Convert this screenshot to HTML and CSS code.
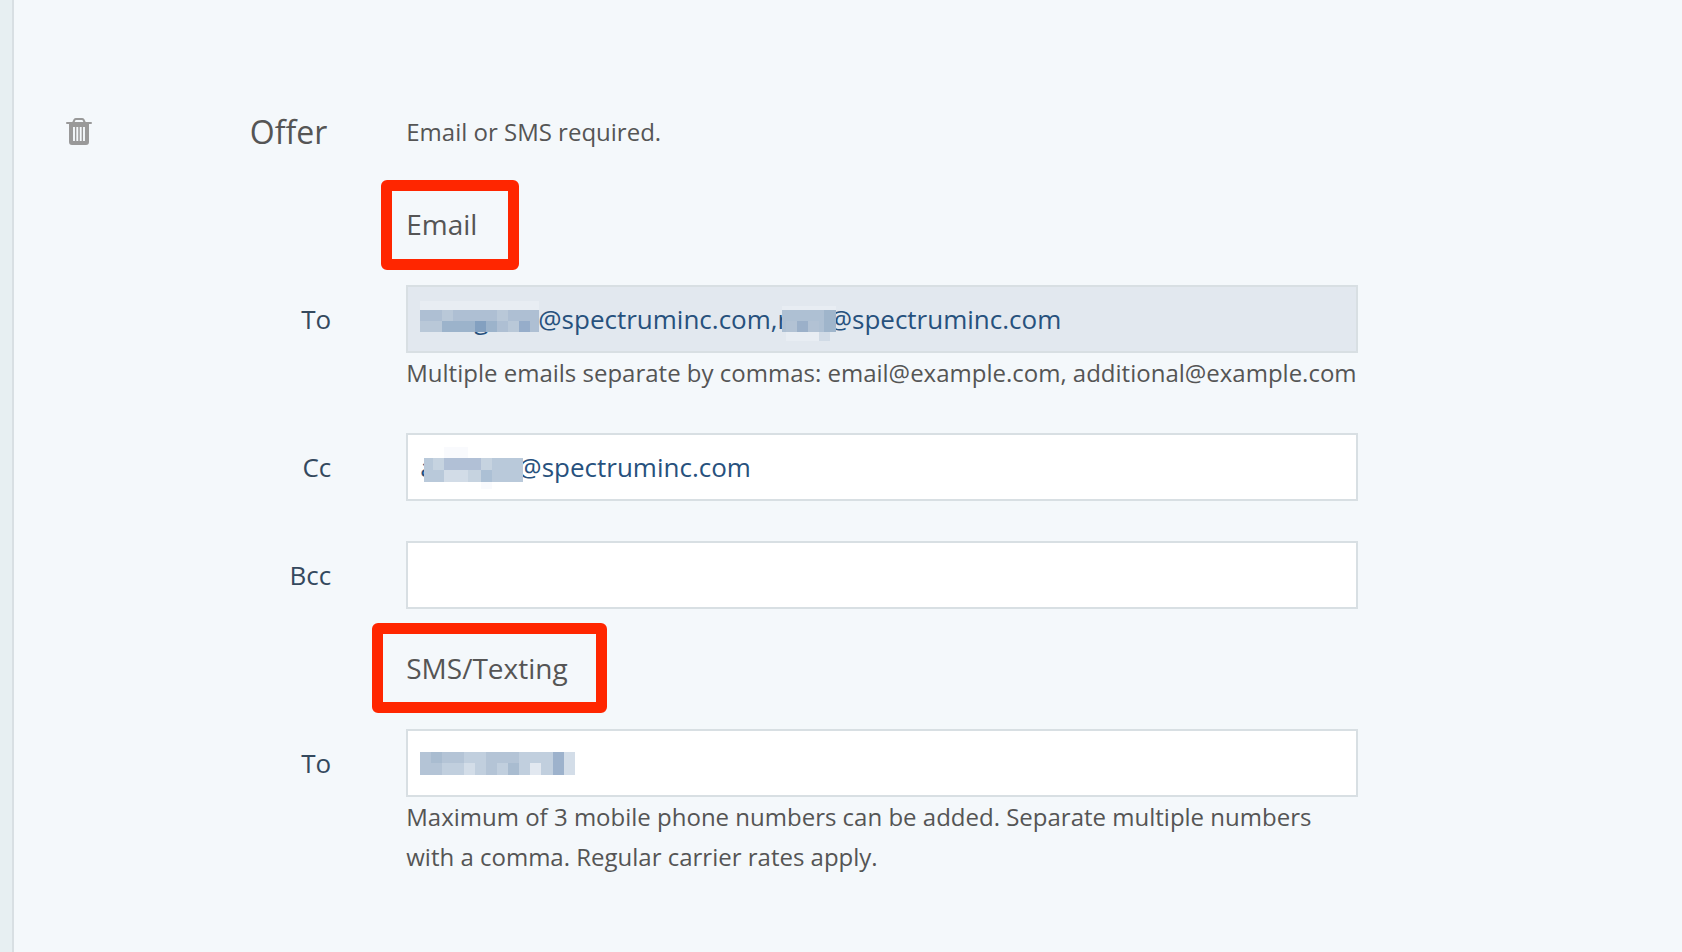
FILE: index.html
```html
<!DOCTYPE html>
<html lang="en">
<head>
    <meta charset="UTF-8">
    <meta name="viewport" content="width=device-width, initial-scale=1.0">
    <title>Offer</title>
    <link rel="stylesheet" href="styles.css">
</head>
<body>
    <main class="panel">
        <form class="offer">
            <div class="row row-top">
                <div class="row-title">
                    <button type="button" class="delete" aria-label="Delete">
                        <svg width="26" height="28" viewBox="0 0 26 28">
                            <path d="M7 5 L8.500 1.800 Q9 1 10 1 H16 Q17 1 17.500 1.800 L19 5" fill="none" stroke="#999" stroke-width="2"/>
                            <path d="M1 4 H25 Q26 4 26 5 Q26 6 25 6 H23 V24 Q23 27 20 27 H6 Q3 27 3 24 V6 H1 Q0 6 0 5 Q0 4 1 4 Z" fill="#999"/>
                            <path d="M8 9 V23 M11.300 9 V23 M14.700 9 V23 M18 9 V23" stroke="#f4f8fb" stroke-width="1.900"/>
                        </svg>
                    </button>
                    <h2>Offer</h2>
                </div>
                <p class="note">Email or SMS required.</p>
            </div>

            <!-- Email -->
            <div class="row row-email">
                <h3 class="group"><span class="marked mark-email">Email</span></h3>
            </div>
            <div class="row">
                <label for="email-to">To</label>
                <div class="field">
                    <input type="text" id="email-to" class="active" value="&nbsp;&nbsp;&nbsp;&nbsp;&nbsp;&nbsp;&nbsp;&nbsp;g&nbsp;&nbsp;&nbsp;&nbsp;&nbsp;&nbsp;&nbsp;&#8202;@spectruminc.com,r&nbsp;&nbsp;&nbsp;&nbsp;&nbsp;&nbsp;@spectruminc.com">
                    <svg class="mask mask-to" width="119" height="31" shape-rendering="crispEdges">
                        <path d="M0 0H119V9H0Z" fill="#e8edf3"/>
                        <path d="M0 9H119V31H0Z" fill="#aebfd3"/>
                        <path d="M22 9H33V20H22Z M77 9H88V20H77Z M0 20H22V31H0Z M88 20H99V31H88Z" fill="#b9c8d8"/>
                        <path d="M22 20H55V31H22Z M66 20H77V31H66Z" fill="#9cb3cb"/>
                        <path d="M55 20H66V31H55Z" fill="#83a0c0"/>
                        <path d="M99 20H110V31H99Z" fill="#96adca"/>
                    </svg>
                    <svg class="mask mask-to2" width="54" height="35" shape-rendering="crispEdges">
                        <path d="M0 0H54V4H0Z M4 26H37V35H4Z" fill="#e8edf3"/>
                        <path d="M0 4H54V26H0Z" fill="#aec0d3"/>
                        <path d="M15 15H26V26H15Z" fill="#9bb0c9"/>
                        <path d="M4 15H15V26H4Z M26 15H37V26H26Z" fill="#b2c2d4"/>
                        <path d="M42 4H54V26H42Z" fill="#9fb5cb"/>
                        <path d="M37 26H48V35H37Z" fill="#d1dbe6"/>
                    </svg>
                    <p class="help">Multiple emails separate by commas: email@example.com, additional@example.com</p>
                </div>
            </div>
            <div class="row">
                <label for="email-cc">Cc</label>
                <div class="field">
                    <input type="text" id="email-cc" value="a&nbsp;&nbsp;&nbsp;&nbsp;&nbsp;&nbsp;&nbsp;&nbsp;&nbsp;&nbsp;&nbsp;&nbsp;&#8202;@spectruminc.com">
                    <svg class="mask mask-cc" width="99" height="42" shape-rendering="crispEdges">
                        <path d="M20 0H44V11H20Z M57 35H68V42H57Z" fill="#f9fafd"/>
                        <path d="M0 11H99V35H0Z" fill="#b9c9da"/>
                        <path d="M9 11H20V23H9Z M57 11H68V23H57Z M44 23H57V35H44Z" fill="#c6d3e0"/>
                        <path d="M20 11H57V23H20Z" fill="#b1c0d6"/>
                        <path d="M20 23H44V35H20Z" fill="#d2dce7"/>
                        <path d="M57 23H68V35H57Z" fill="#acc0d5"/>
                    </svg>
                </div>
            </div>
            <div class="row">
                <label for="email-bcc">Bcc</label>
                <div class="field">
                    <input type="text" id="email-bcc">
                </div>
            </div>

            <!-- SMS -->
            <div class="row row-sms">
                <h3 class="group"><span class="marked mark-sms">SMS/Texting</span></h3>
            </div>
            <div class="row">
                <label for="sms-to">To</label>
                <div class="field">
                    <input type="text" id="sms-to">
                    <svg class="mask mask-sms-to" width="155" height="23" shape-rendering="crispEdges">
                        <path d="M0 0H155V23H0Z" fill="#c1cfde"/>
                        <path d="M0 0H11V11H0Z M22 0H44V11H22Z M66 0H99V11H66Z M0 11H22V23H0Z M66 11H77V23H66Z" fill="#b4c4d6"/>
                        <path d="M11 0H22V11H11Z M88 11H99V23H88Z" fill="#a9bcd0"/>
                        <path d="M44 11H55V23H44Z M144 0H155V23H144Z" fill="#d3dde8"/>
                        <path d="M110 11H121V23H110Z" fill="#e2e8f0"/>
                        <path d="M133 0H144V23H133Z" fill="#9db2cc"/>
                    </svg>
                    <p class="help">Maximum of 3 mobile phone numbers can be added. Separate multiple numbers with a comma. Regular carrier rates apply.</p>
                </div>
            </div>
        </form>
    </main>
</body>
</html>
```
FILE: styles.css
```css
* {
    box-sizing: border-box;
}

body {
    margin: 0;
    padding-left: 12px;
    background-color: #e7eff2;
    font-family: "Open Sans", sans-serif;
    font-size: 24px;
    line-height: 40px;
    color: #555;
}

h2, h3, p {
    margin: 0;
    font-weight: normal;
}

.panel {
    min-height: 100vh;
    padding: 99px 324px 0 0;
    border-left: 2px solid #d8dfe3;
    background-color: #f4f8fb;
}

.row {
    display: grid;
    grid-template-columns: 1fr 3fr;
    column-gap: 75px;
    margin-bottom: 40px;
}

.row-top {
    height: 66px;
    margin: 0;
    align-items: center;
}

.row-title {
    display: flex;
    align-items: center;
    justify-content: space-between;
    padding: 0 4px 0 52px;
}

.delete {
    display: flex;
    padding: 0;
    border: 0;
    background: none;
    cursor: pointer;
}

h2 {
    font-size: 32px;
}

.row-email {
    height: 120px;
    margin: 0;
    align-items: center;
}

.row-sms {
    height: 120px;
    margin: -40px 0 0;
    align-items: center;
}

.group {
    grid-column: 2;
    padding-bottom: 2px;
    font-size: 28px;
}

/* red frame around the group name */
.marked {
    position: relative;
}

.marked::after {
    content: "";
    position: absolute;
    border: 11px solid #ff2600;
    border-radius: 6px;
}

.mark-email::after {
    inset: -25px -42px -27px -25px;
}

.mark-sms::after {
    inset: -26px -39px -26px -34px;
}

label {
    height: 68px;
    line-height: 68px;
    font-size: 26px;
    color: #34495e;
    text-align: right;
}

.field {
    position: relative;
}

input {
    display: block;
    width: 100%;
    height: 68px;
    padding: 0 12px;
    border: 2px solid #d8dfe3;
    background-color: #fff;
    font-family: inherit;
    font-size: 26px;
    color: #27517d;
}

input.active {
    background-color: #e2e8ef;
}

/* pixelated patches over private values */
.mask {
    position: absolute;
    pointer-events: none;
}

.mask-to {
    left: 14px;
    top: 16px;
}

.mask-to2 {
    left: 376px;
    top: 21px;
}

.mask-cc {
    left: 18px;
    top: 14px;
}

.mask-sms-to {
    left: 14px;
    top: 23px;
}
```
